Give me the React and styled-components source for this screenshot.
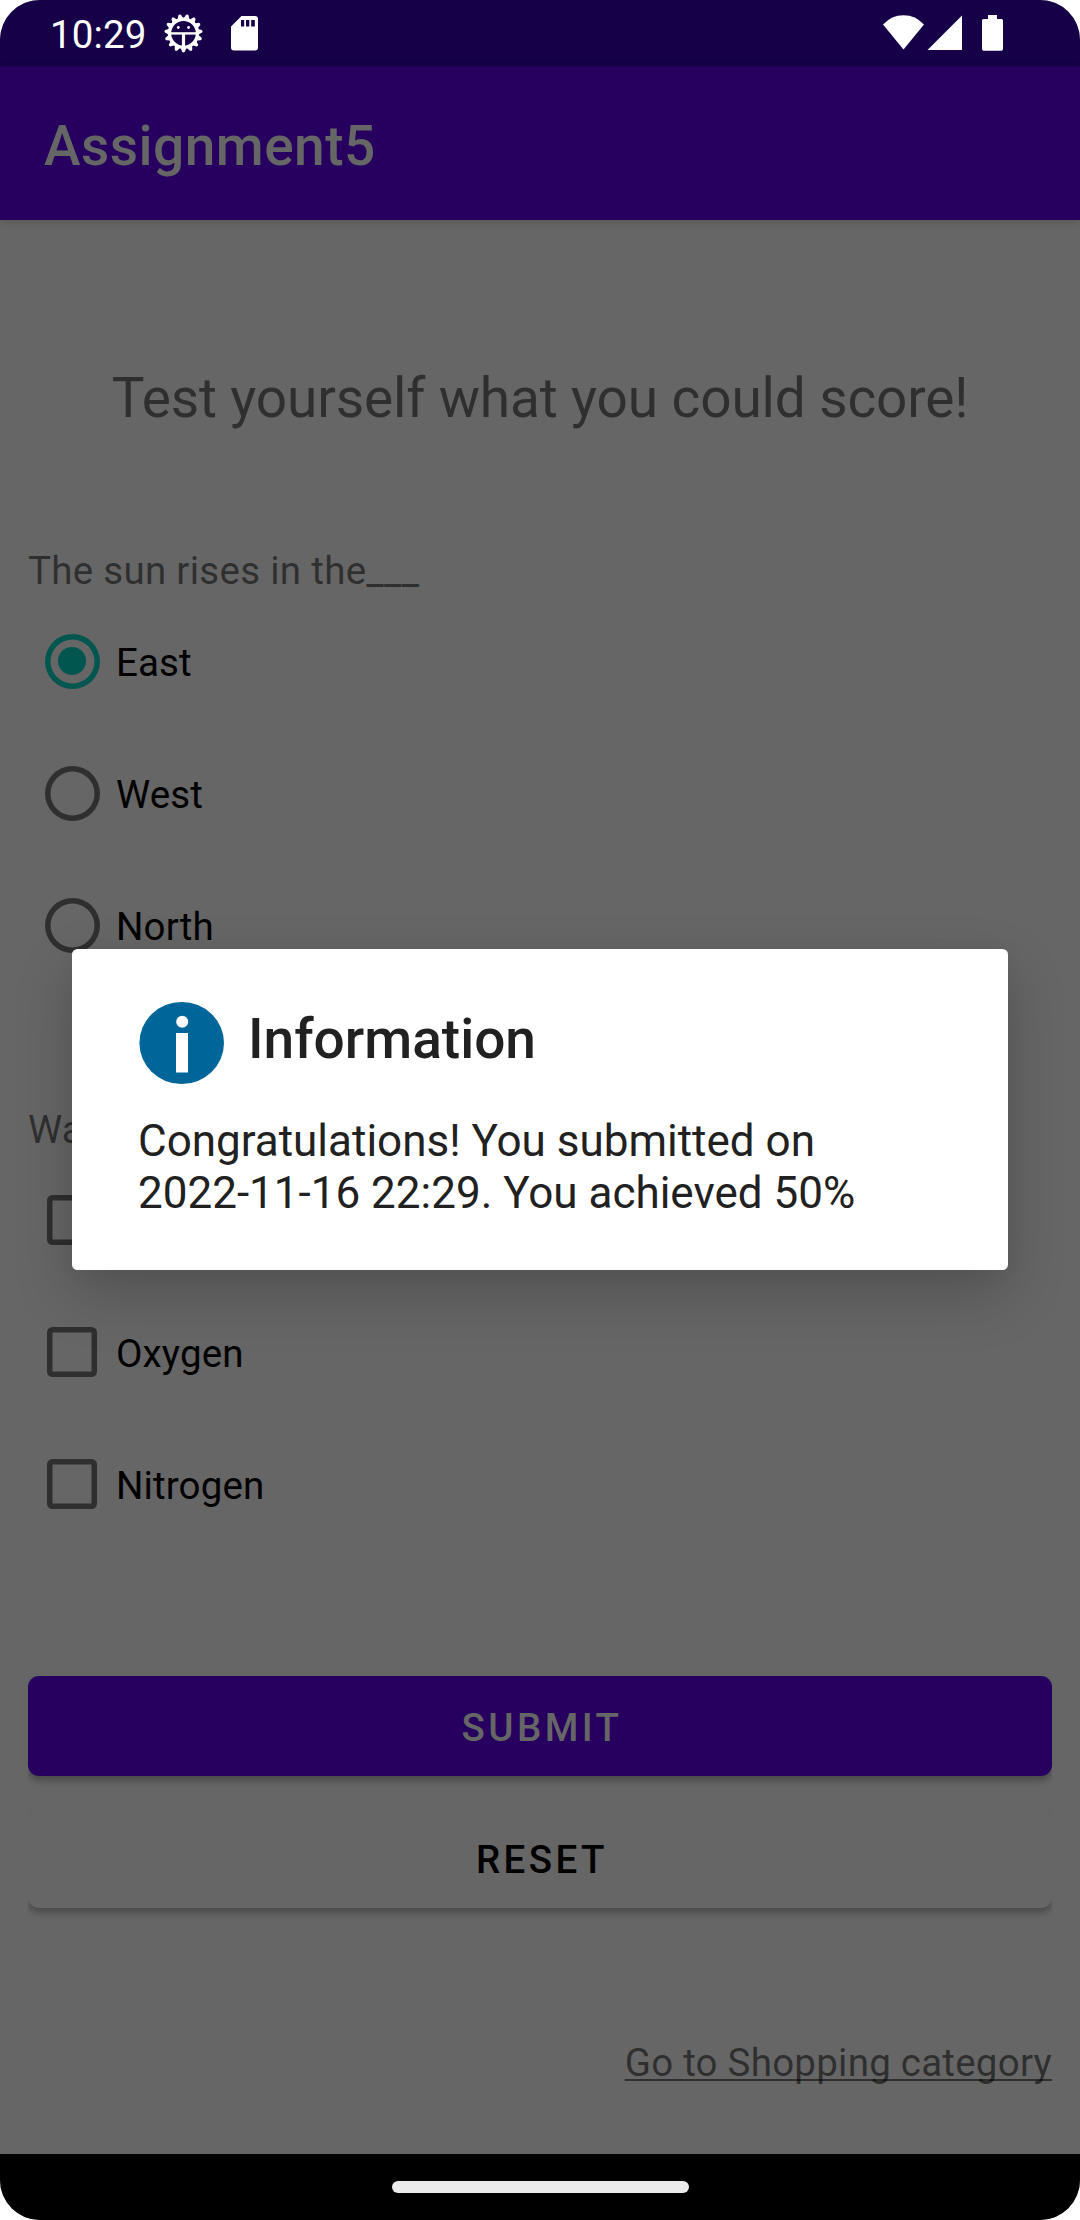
import React from "react";
import styled, { createGlobalStyle } from "styled-components";

const GlobalStyle = createGlobalStyle`
  *, *::before, *::after { box-sizing: border-box; }
  html, body { margin: 0; padding: 0; background: #fff; }
  body { font-family: Roboto, "Liberation Sans", sans-serif; }
`;

const dim = "rgba(0, 0, 0, 0.54)";

const Screen = styled.div`
  position: relative;
  width: 1080px;
  height: 2220px;
  display: flex;
  flex-direction: column;
  overflow: hidden;
  border-radius: 40px;
  background: #666;
  font-size: 38.5px;
  color: #000;
`;

const StatusBar = styled.header`
  flex: none;
  height: 66px;
  display: flex;
  justify-content: space-between;
  padding: 0 76px 0 50px;
  background: #160048;
  color: #fff;
`;

const StatusGroup = styled.div`
  display: flex;
  align-items: flex-start;

  svg { display: block; flex: none; }
`;

const Clock = styled.span`
  width: 112px;
  padding-top: 4px;
  line-height: 62px;
  letter-spacing: 0.15px;
  white-space: nowrap;
`;

const AppBar = styled.div`
  flex: none;
  height: 154px;
  display: flex;
  align-items: center;
  padding: 6px 44px 0;
  background: #27005f;
  color: #666;
  box-shadow: 0 2px 8px rgba(0, 0, 0, 0.14);
`;

const AppTitle = styled.h1`
  margin: 0;
  font-size: 55px;
  font-weight: 500;
  letter-spacing: 0.48px;
`;

const Content = styled.main`
  flex: 1;
  display: flex;
  flex-direction: column;
  padding: 141px 28px 0;
`;

const Heading = styled.h2`
  margin: 0 0 110px;
  font-size: 55px;
  font-weight: 400;
  line-height: 74px;
  letter-spacing: -0.14px;
  text-align: center;
  white-space: nowrap;
  color: ${dim};
`;

const Question = styled.section`
  margin-bottom: ${(p) => p.$after}px;
`;

const Prompt = styled.p`
  margin: 0;
  padding-top: 2px;
  line-height: 48px;
  letter-spacing: 0.29px;
  color: ${dim};
`;

const Option = styled.label`
  height: 132px;
  display: flex;
  align-items: center;
`;

const Control = styled.span`
  width: 88px;
  display: flex;
  justify-content: center;
`;

const RadioMark = styled.span`
  width: 55px;
  height: 55px;
  display: grid;
  place-items: center;
  border-radius: 50%;
  box-shadow: inset 0 0 0 5.5px ${(p) => (p.$on ? "#01574f" : dim)};

  &::after {
    content: "";
    width: 28px;
    height: 28px;
    border-radius: 50%;
    background: ${(p) => (p.$on ? "#01574f" : "transparent")};
  }
`;

const CheckMark = styled.span`
  width: 50px;
  height: 50px;
  border-radius: 5.5px;
  box-shadow: inset 0 0 0 5.5px ${dim};
`;

const OptionText = styled.span`
  padding-top: 3px;
  letter-spacing: 0.13px;
`;

const ButtonSlot = styled.div`
  height: 132px;
  overflow: hidden;
`;

const Button = styled.button`
  width: 100%;
  height: 100px;
  display: block;
  border: 0;
  border-radius: 11px;
  padding: 3px 0 0 4px;
  font: 500 38.5px Roboto, sans-serif;
  letter-spacing: 0.0893em;
  background: ${(p) => (p.$primary ? "#27005f" : "#666")};
  color: ${(p) => (p.$primary ? "#666" : "#000")};
  box-shadow: 0 5px 7px rgba(0, 0, 0, 0.27);
`;

const ShopLink = styled.a`
  align-self: flex-end;
  margin-top: 98px;
  line-height: 50px;
  letter-spacing: 0.24px;
  color: ${dim};
  text-decoration: underline;
  text-decoration-thickness: 2px;
  text-underline-offset: 3px;
  text-decoration-skip-ink: none;
`;

const NavBar = styled.footer`
  flex: none;
  height: 66px;
  display: flex;
  align-items: flex-start;
  justify-content: center;
  padding-top: 27px;
  background: #000;
`;

const HomeHandle = styled.span`
  width: 297px;
  height: 11.5px;
  border-radius: 6px;
  background: #ebebeb;
`;

const Dialog = styled.div`
  position: absolute;
  top: 949px;
  left: 72px;
  width: 936px;
  height: 321px;
  padding: 50px 66px 0;
  border-radius: 5.5px;
  background: #fff;
  color: #212121;
  box-shadow: 0 24px 60px rgba(0, 0, 0, 0.2), 0 2px 20px rgba(0, 0, 0, 0.04);
`;

const DialogHeader = styled.div`
  display: flex;
  height: 88px;

  svg { display: block; flex: none; }
`;

const DialogTitle = styled.h3`
  margin: 0 0 0 22px;
  font-size: 55px;
  font-weight: 500;
  line-height: 80px;
`;

const Message = styled.p`
  margin: 28px 0 0;
  font-size: 44px;
  line-height: 52px;
  white-space: pre-line;
`;

const teeth = Array.from({ length: 15 }, (_, i) => 180 + i * 24);

function BugIcon() {
  return (
    <svg width="44" height="66" viewBox="162 0 44 66">
      <g fill="#fff">
        {teeth.map((a) => (
          <path key={a} d="M180.4 19 L182.2 14.6 Q183.5 13.4 184.8 14.6 L186.6 19 Z" transform={`rotate(${a} 183.5 33.2)`} />
        ))}
      </g>
      <circle cx="183.5" cy="33.2" r="14" fill="none" stroke="#fff" strokeWidth="3.4" />
      <path d="M171 33.4 H196" stroke="#fff" strokeWidth="2.4" />
      <path d="M183.5 33 V47" stroke="#fff" strokeWidth="3.2" />
      <circle cx="178.3" cy="27.5" r="1.4" fill="#fff" />
      <circle cx="188.6" cy="27.5" r="1.4" fill="#fff" />
    </svg>
  );
}

function CardIcon() {
  return (
    <svg width="54" height="66" viewBox="206 0 54 66">
      <path
        fill="#fff"
        fillRule="evenodd"
        d="M241.5 16 H255 Q258 16 258 19 V47.500 Q258 50.500 255 50.500 H234 Q231 50.500 231 47.500 V26.500 Z M241 20 V26.500 H244.200 V20 Z M246 20 V26.500 H249.300 V20 Z M251.200 20 V26.500 H254.800 V20 Z"
      />
    </svg>
  );
}

function SystemIcons() {
  return (
    <svg width="124" height="66" viewBox="880 0 124 66">
      <g fill="#fff">
        <path d="M883 24.500 Q891.500 15.200 903.500 15.200 Q915.500 15.200 924 24.500 L903.500 49.500 Z" />
        <path d="M962 15.500 V50 H927.500 Z" />
        <path d="M988 15 H997 V19 H1001.500 Q1003 19 1003 20.500 V49 Q1003 50.700 1001.500 50.700 H983.500 Q982 50.700 982 49 V20.500 Q982 19 983.500 19 H988 Z" />
      </g>
    </svg>
  );
}

function InfoIcon() {
  return (
    <svg width="88" height="88" viewBox="138 999 88 88">
      <ellipse cx="181.7" cy="1043" rx="42.300" ry="41" fill="#006699" />
      <circle cx="182.200" cy="1021.800" r="6" fill="#fff" />
      <rect x="176" y="1033" width="12" height="39.500" fill="#fff" />
    </svg>
  );
}

const directions = ["East", "West", "North"];
const gases = ["", "Oxygen", "Nitrogen"];

export default function App() {
  return (
    <>
      <GlobalStyle />
      <Screen>
        <StatusBar>
          <StatusGroup>
            <Clock>10:29</Clock>
            <BugIcon />
            <CardIcon />
          </StatusGroup>
          <StatusGroup>
            <SystemIcons />
          </StatusGroup>
        </StatusBar>
        <AppBar>
          <AppTitle>Assignment5</AppTitle>
        </AppBar>
        <Content>
          <Heading>Test yourself what you could score!</Heading>
          <Question $after={113}>
            <Prompt>The sun rises in the___</Prompt>
            {directions.map((name) => (
              <Option key={name}>
                <Control>
                  <RadioMark $on={name === "East"} />
                </Control>
                <OptionText>{name}</OptionText>
              </Option>
            ))}
          </Question>
          <Question $after={126}>
            <Prompt>Wa</Prompt>
            {gases.map((name) => (
              <Option key={name}>
                <Control>
                  <CheckMark />
                </Control>
                {name && <OptionText>{name}</OptionText>}
              </Option>
            ))}
          </Question>
          <ButtonSlot>
            <Button $primary>SUBMIT</Button>
          </ButtonSlot>
          <ButtonSlot>
            <Button>RESET</Button>
          </ButtonSlot>
          <ShopLink>Go to Shopping category</ShopLink>
        </Content>
        <NavBar>
          <HomeHandle />
        </NavBar>
        <Dialog role="dialog">
          <DialogHeader>
            <InfoIcon />
            <DialogTitle>Information</DialogTitle>
          </DialogHeader>
          <Message>{"Congratulations! You submitted on\n2022-11-16 22:29. You achieved 50%"}</Message>
        </Dialog>
      </Screen>
    </>
  );
}
